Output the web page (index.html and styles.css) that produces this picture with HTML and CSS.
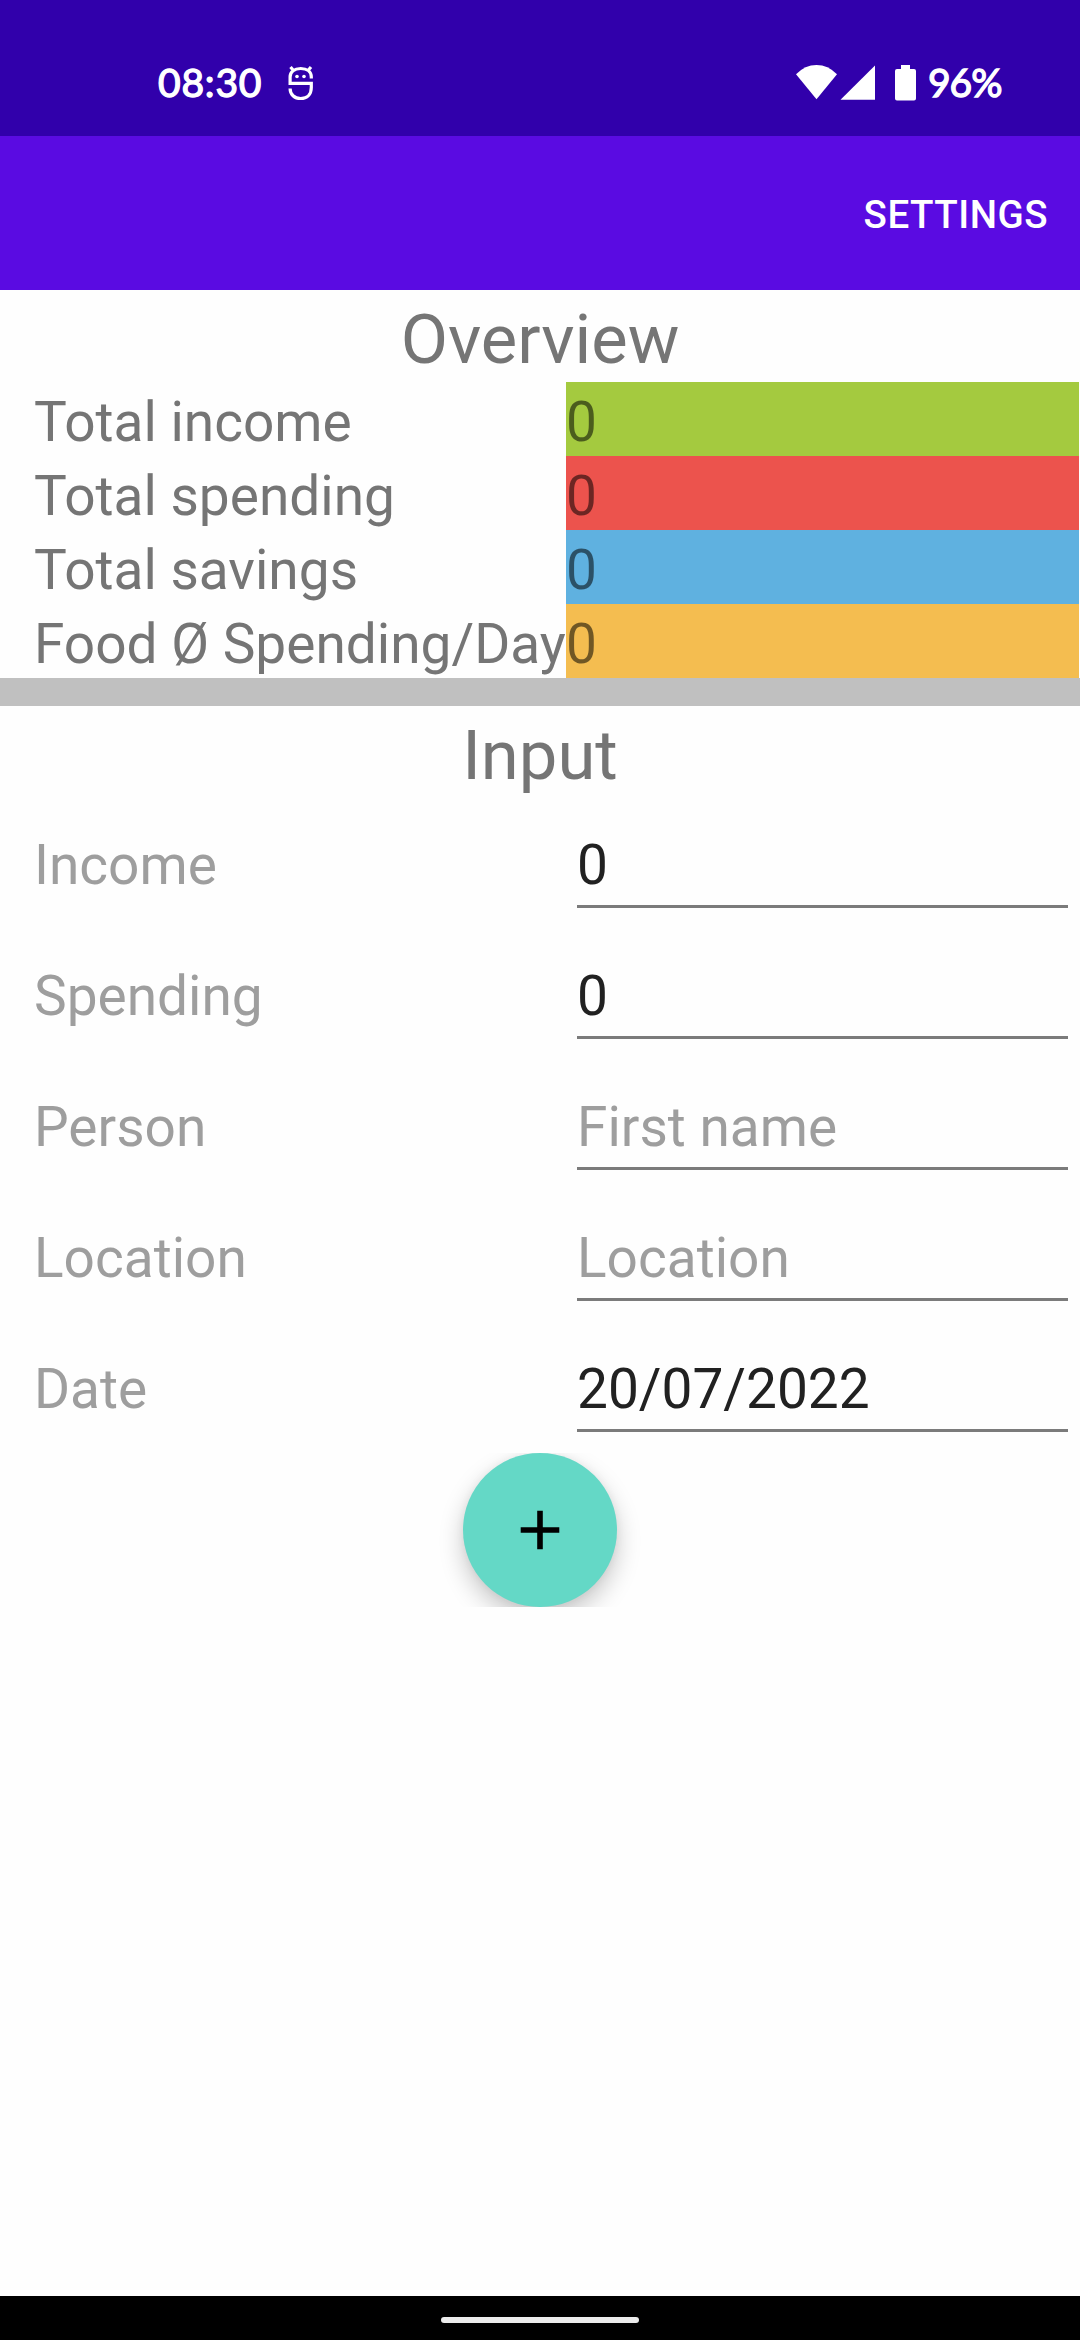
FILE: index.html
```html
<!DOCTYPE html>
<html lang="en">
<head>
<meta charset="utf-8">
<title>Budget</title>
<link rel="stylesheet" href="styles.css">
</head>
<body>
<header class="status">
  <span class="clock">08:30</span>
  <svg class="bug" width="26" height="36" viewBox="0 0 26 36" fill="none" stroke="#fff" stroke-width="3.2">
    <path d="M23.300 13.500V12C23.300 6.500 19 3.500 12.700 3.500S2.100 6.500 2.100 12V18.400H23.300V22.500C23.300 29.500 19 33.500 12.700 33.500S2.100 29.500 2.100 23.500M5.500 5.500L2.500 2M20 5.500L23 2"/>
    <circle cx="9" cy="11.500" r="1.800" fill="#fff" stroke="none"/>
    <circle cx="16" cy="11.500" r="1.800" fill="#fff" stroke="none"/>
  </svg>
  <svg class="signals" width="121" height="36" viewBox="0 0 121 36" fill="#fff">
    <path d="M0 9.300Q9 0 20.500 0T41 9.300L20.500 34.300Z"/>
    <path d="M44.500 34.700L79 .500V34.700Z"/>
    <path d="M105 0h9v4h4a2 2 0 0 1 2 2V33.500a2 2 0 0 1-2 2H101a2 2 0 0 1-2-2V6a2 2 0 0 1 2-2h4Z"/>
  </svg>
  <span class="battery">96%</span>
</header>
<nav class="toolbar"><span class="action">SETTINGS</span></nav>
<main class="content">
  <h1 class="title">Overview</h1>
  <section class="overview">
    <div class="label">Total income</div><div class="value green">0</div>
    <div class="label">Total spending</div><div class="value red">0</div>
    <div class="label">Total savings</div><div class="value blue">0</div>
    <div class="label">Food Ø Spending/Day</div><div class="value amber">0</div>
  </section>
  <div class="divider"></div>
  <h1 class="title">Input</h1>
  <section class="form">
    <div class="row"><span class="name">Income</span><span class="field">0</span></div>
    <div class="row"><span class="name">Spending</span><span class="field">0</span></div>
    <div class="row"><span class="name">Person</span><span class="field hint">First name</span></div>
    <div class="row"><span class="name">Location</span><span class="field hint">Location</span></div>
    <div class="row"><span class="name">Date</span><span class="field">20/07/2022</span></div>
  </section>
  <div class="fab-area">
    <div class="fab">
      <svg width="40" height="40" viewBox="0 0 40 40"><path d="M17.200 .700h5.600v16.500h16.500v5.600H22.800v16.500h-5.600V22.800H.700v-5.600h16.500Z"/></svg>
    </div>
  </div>
</main>
<footer class="navbar"><div class="handle"></div></footer>
</body>
</html>
```
FILE: styles.css
```css
* { box-sizing: border-box; }
body {
  margin: 0;
  width: 1080px;
  height: 2340px;
  display: flex;
  flex-direction: column;
  background: #fefefe;
  font-family: Roboto, sans-serif;
  color: #757575;
}
.status {
  height: 136px;
  padding: 64px 0 0 158px;
  display: flex;
  align-items: flex-start;
  background: #3100ab;
  color: #fff;
  font-family: Lato, sans-serif;
  font-size: 39px;
  line-height: 36px;
  font-weight: 400;
  -webkit-text-stroke: 1.3px #fff;
}
.status > * { flex-shrink: 0; }
.status svg { -webkit-text-stroke: 0; }
.clock { width: 130px; letter-spacing: 0.8px; }
.bug { margin-top: 1px; }
.signals { margin: 1px 11px 0 482px; }
.battery { letter-spacing: -1px; }
.toolbar {
  height: 154px;
  padding: 2px 32px 0;
  display: flex;
  align-items: center;
  justify-content: flex-end;
  background: #5a0be2;
  color: #fff;
  font-size: 38.5px;
  font-weight: 500;
  letter-spacing: 0.5px;
}
.content { flex: 1; }
.title {
  margin: 0;
  height: 92px;
  padding-top: 6px;
  font-size: 68.75px;
  font-weight: 400;
  line-height: 88px;
  text-align: center;
}
.overview {
  display: grid;
  grid-template-columns: 566px 513px;
  grid-auto-rows: 74px;
  font-size: 55px;
  line-height: 68px;
}
.label, .value { padding-top: 6px; white-space: nowrap; }
.label { padding-left: 34px; }
.value { color: rgba(0, 0, 0, .54); }
.green { background: #a4ca3f; }
.red { background: #ec534d; }
.blue { background: #5fb1e0; }
.amber { background: #f4bd50; }
.divider { height: 28px; background: #c0c0c0; }
.form { padding: 27px 0 0 34px; font-size: 55px; }
.row { height: 131px; display: flex; }
.name { width: 543px; color: #9e9e9e; line-height: 80px; }
.field {
  width: 491px;
  height: 83px;
  border-bottom: 3px solid #7b7b7b;
  line-height: 80px;
  color: #212121;
}
.hint { color: #9e9e9e; }
.fab-area {
  height: 154px;
  margin-top: -27px;
  display: flex;
  justify-content: center;
  overflow: hidden;
}
.fab {
  width: 154px;
  height: 154px;
  border-radius: 50%;
  display: flex;
  align-items: center;
  justify-content: center;
  background: #64d8c6;
  box-shadow: 0 11px 24px rgba(0, 0, 0, .22), 0 0 8px rgba(0, 0, 0, .05);
}
.navbar {
  height: 44px;
  padding-top: 21px;
  background: #000;
}
.handle {
  width: 198px;
  height: 6px;
  margin: 0 auto;
  border-radius: 3px;
  background: #ebebeb;
}
```
